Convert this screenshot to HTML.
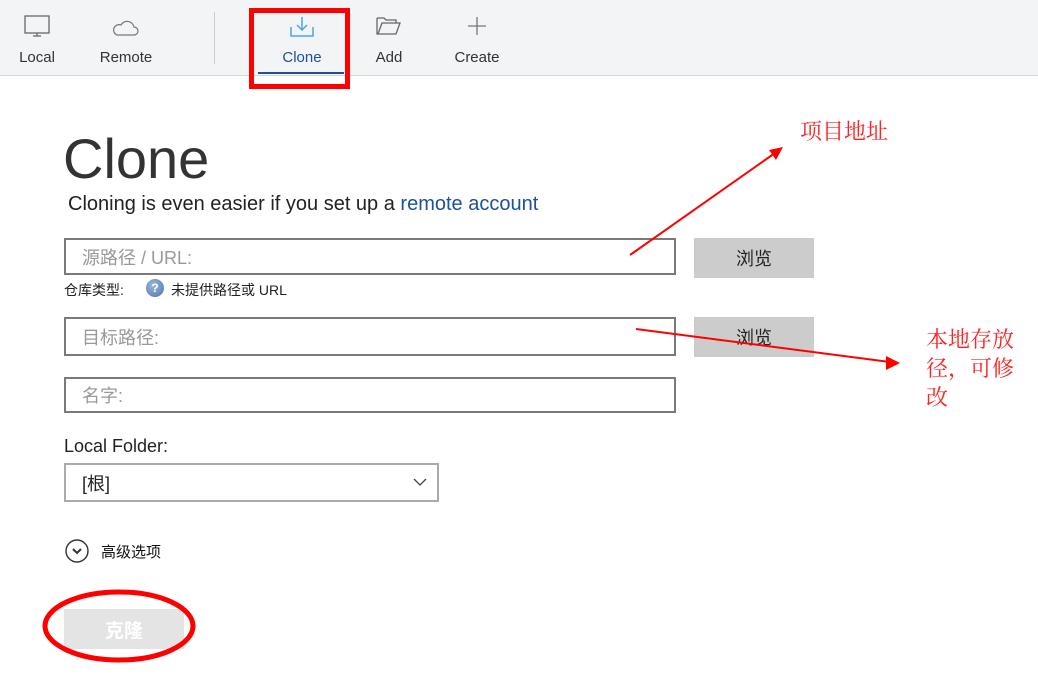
<!DOCTYPE html>
<html><head><meta charset="utf-8"><style>
*{margin:0;padding:0;box-sizing:border-box}
body{width:1038px;height:691px;background:#fff;position:relative;overflow:hidden;font-family:"Liberation Sans","Noto Sans CJK SC",sans-serif;color:#222}
.a{position:absolute}
.tb{left:0;top:0;width:1038px;height:76px;background:#f3f4f6;border-bottom:1px solid #d8d8d8}
.lbl{font-size:15px;color:#333;text-align:center;width:80px}
.inp{border:2px solid #7a7a7a;background:#fff;font-size:18px;color:#999;padding-left:16px;display:flex;align-items:center}
.btn{background:#cccccc;font-size:18px;color:#222;display:flex;align-items:center;justify-content:center}
.red{color:#f22;font-family:"Liberation Serif","Noto Serif CJK SC",serif;font-size:22px}
</style></head><body>
<div class="a tb"></div>
<svg class="a" style="left:24px;top:15px" width="28" height="24" viewBox="0 0 28 24" fill="none" stroke="#666" stroke-width="1.3"><rect x="1" y="1" width="24" height="17"/><path d="M9 21h8M13 18v3"/></svg>
<div class="a lbl" style="left:-3px;top:49px">Local</div>
<svg class="a" style="left:112px;top:17px" width="28" height="20" viewBox="0 0 28 20" fill="none" stroke="#777" stroke-width="1.2"><path d="M5 18h17a4 4 0 0 0 0-8 7 7 0 0 0-13-2 5 5 0 0 0-4 10z"/></svg>
<div class="a lbl" style="left:86px;top:49px">Remote</div>
<div class="a" style="left:214px;top:12px;width:1px;height:52px;background:#ccc"></div>
<svg class="a" style="left:289px;top:15px" width="26" height="24" viewBox="0 0 26 24" fill="none" stroke="#4aa3f0" stroke-width="1.5"><path d="M2 12v9h22v-9M13 2v13M8 10l5 5 5-5"/></svg>
<div class="a lbl" style="left:262px;top:49px;color:#1e4fa0">Clone</div>
<div class="a" style="left:258px;top:72px;width:86px;height:2px;background:#1e4fa0"></div>
<div class="a" style="left:249px;top:8px;width:101px;height:81px;border:5px solid #f00"></div>
<svg class="a" style="left:376px;top:16px" width="26" height="20" viewBox="0 0 26 20" fill="none" stroke="#666" stroke-width="1.3"><path d="M1 2h7l2 2h10v3M1 2v16h19l4-11H6L2 18"/></svg>
<div class="a lbl" style="left:349px;top:49px">Add</div>
<svg class="a" style="left:467px;top:16px" width="20" height="20" viewBox="0 0 20 20" stroke="#777" stroke-width="1.3"><path d="M10 1v18M1 10h18"/></svg>
<div class="a lbl" style="left:437px;top:49px">Create</div>

<div class="a" style="left:63px;top:126px;font-size:56px;color:#333">Clone</div>
<div class="a" style="left:68px;top:193px;font-size:20px;color:#222">Cloning is even easier if you set up a <span style="color:#1e4fa0">remote account</span></div>

<div class="a inp" style="left:64px;top:238px;width:612px;height:37px">源路径 / URL:</div>
<div class="a btn" style="left:694px;top:238px;width:120px;height:40px">浏览</div>
<div class="a" style="left:64px;top:280px;font-size:14px;color:#222">仓库类型:</div>
<div class="a" style="left:146px;top:279px;width:18px;height:18px;border-radius:50%;background:radial-gradient(circle at 40% 35%,#9bb8dc,#4a73a8);color:#fff;font-size:12px;font-weight:bold;text-align:center;line-height:18px">?</div>
<div class="a" style="left:171px;top:280px;font-size:14px;color:#222">未提供路径或 URL</div>

<div class="a inp" style="left:64px;top:317px;width:612px;height:39px">目标路径:</div>
<div class="a btn" style="left:694px;top:317px;width:120px;height:40px">浏览</div>
<div class="a inp" style="left:64px;top:377px;width:612px;height:36px">名字:</div>

<div class="a" style="left:64px;top:436px;font-size:18px;color:#222">Local Folder:</div>
<div class="a" style="left:64px;top:463px;width:375px;height:39px;border:2px solid #aaa;font-size:18px;padding-left:16px;display:flex;align-items:center;color:#222">[根]</div>
<svg class="a" style="left:412px;top:476px" width="16" height="12" viewBox="0 0 16 12" fill="none" stroke="#444" stroke-width="1.3"><path d="M2 3l6 6 6-6"/></svg>

<svg class="a" style="left:65px;top:539px" width="24" height="24" viewBox="0 0 24 24" fill="none" stroke="#333" stroke-width="1.4"><circle cx="12" cy="12" r="11"/><path d="M8 10l4 4 4-4" stroke-width="2"/></svg>
<div class="a" style="left:101px;top:541px;font-size:15px;color:#111">高级选项</div>

<div class="a" style="left:64px;top:609px;width:120px;height:40px;background:#e4e4e4;color:#fff;font-size:19px;font-weight:bold;display:flex;align-items:center;justify-content:center">克隆</div>

<svg class="a" style="left:0;top:0" width="1038" height="691" fill="none">
<ellipse cx="119" cy="626" rx="74" ry="34" stroke="#f00" stroke-width="5"/>
<path d="M630 255L775 153" stroke="#f00" stroke-width="2"/>
<path d="M783 147L769 150L776 160Z" fill="#f00"/>
<path d="M636 329L890 362" stroke="#f00" stroke-width="2"/>
<path d="M900 363L886 356L886 370Z" fill="#f00"/>
</svg>
<div class="a red" style="left:800px;top:115px">项目地址</div>
<div class="a red" style="left:926px;top:325px;width:96px;line-height:29px">本地存放径，可修改</div>
</body></html>
